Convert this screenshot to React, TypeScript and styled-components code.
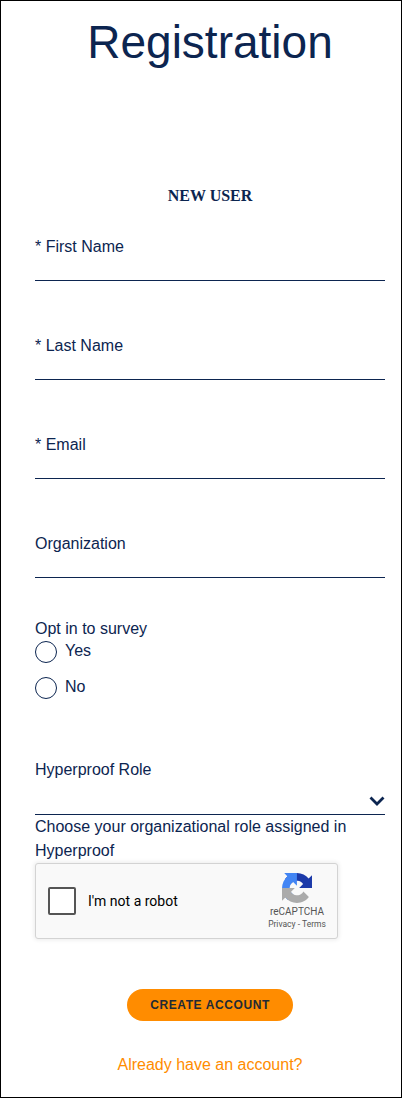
import styled, { createGlobalStyle } from 'styled-components';

const GlobalStyle = createGlobalStyle`
  html, body {
    margin: 0;
    background: #ffffff;
  }
`;

const Page = styled.div`
  box-sizing: border-box;
  width: 402px;
  height: 1098px;
  border: 1px solid #000000;
  padding: 0 16px 0 34px;
  overflow: hidden;
  font-family: 'Liberation Sans', Arial, sans-serif;
  font-size: 16px;
  color: #0c2550;
`;

const Title = styled.h1`
  margin: 14px 0 0;
  text-align: center;
  font-size: 46px;
  line-height: 54px;
  font-weight: 400;
`;

const SectionTitle = styled.h2`
  margin: 118px 0 0;
  text-align: center;
  font-family: 'Liberation Serif', 'Times New Roman', serif;
  font-size: 16px;
  line-height: 18px;
  font-weight: 700;
`;

const Form = styled.form`
  display: flex;
  flex-direction: column;
  margin-top: 32px;
`;

const Field = styled.label<{ $tight?: boolean }>`
  display: block;
  height: ${(p) => (p.$tight ? '85px' : '99px')};
`;

const FieldLabel = styled.span`
  display: block;
  line-height: 20px;
`;

const TextInput = styled.input`
  display: block;
  box-sizing: border-box;
  width: 100%;
  height: 24px;
  padding: 0;
  border: 0;
  border-bottom: 1px solid #0c2550;
  outline: none;
  background: transparent;
`;

const RadioGroup = styled.fieldset`
  margin: 0;
  padding: 0;
  border: 0;
`;

const GroupLabel = styled.legend`
  padding: 0;
  line-height: 20px;
`;

const RadioRow = styled.label`
  display: flex;
  align-items: flex-start;
  gap: 8px;
  height: 36px;
  line-height: 24px;
`;

const Radio = styled.input`
  appearance: none;
  box-sizing: border-box;
  width: 22px;
  height: 22px;
  margin: 2px 0 0;
  border: 1px solid #0c2550;
  border-radius: 50%;
  background: #ffffff;
`;

const SelectWrap = styled.div`
  position: relative;
  margin-top: 49px;
`;

const RoleSelect = styled.select`
  appearance: none;
  display: block;
  box-sizing: border-box;
  width: 100%;
  height: 35px;
  padding: 0;
  border: 0;
  border-bottom: 1px solid #0c2550;
  border-radius: 0;
  outline: none;
  background: transparent;
`;

const Chevron = styled.svg`
  position: absolute;
  right: 0;
  bottom: 9px;
  width: 16px;
  height: 10px;
  fill: none;
  stroke: #0c2550;
  stroke-width: 2.8;
`;

const HelpText = styled.p`
  margin: 0;
  line-height: 24px;
`;

const Captcha = styled.div`
  box-sizing: border-box;
  display: flex;
  align-items: center;
  width: 303px;
  height: 76px;
  padding: 0 11px 0 12px;
  border: 1px solid #d3d3d3;
  border-radius: 3px;
  background: #f9f9f9;
  box-shadow: 0 0 4px 1px rgba(0, 0, 0, 0.08);
  font-family: Roboto, Arial, sans-serif;
  color: #000000;
`;

const CaptchaBox = styled.span`
  box-sizing: border-box;
  flex: none;
  width: 28px;
  height: 28px;
  border: 2px solid #555555;
  border-radius: 2px;
  background: #ffffff;
`;

const CaptchaText = styled.span`
  flex: 1;
  margin-left: 12px;
  font-size: 14px;
`;

const CaptchaBrand = styled.div`
  display: flex;
  flex-direction: column;
  align-items: center;
  width: 58px;
  margin-top: 1px;
  color: #555555;
`;

const CaptchaLogo = styled.svg`
  width: 30px;
  height: 30px;
`;

const BrandName = styled.span`
  margin-top: 3px;
  font-size: 10px;
  line-height: 12px;
`;

const BrandLinks = styled.span`
  font-size: 8.5px;
  line-height: 12px;
  white-space: nowrap;
`;

const SubmitButton = styled.button`
  display: block;
  align-self: center;
  width: 166px;
  height: 32px;
  margin-top: 50px;
  padding: 0;
  border: 0;
  border-radius: 16px;
  background: #ff8c00;
  color: #222a35;
  font-family: 'Liberation Sans', Arial, sans-serif;
  font-size: 12px;
  font-weight: 700;
  letter-spacing: 0.6px;
`;

const LoginLink = styled.a`
  display: block;
  margin-top: 34px;
  text-align: center;
  color: #ff8c00;
  line-height: 20px;
`;

export default function App() {
  return (
    <Page>
      <GlobalStyle />
      <Title>Registration</Title>
      <SectionTitle>NEW USER</SectionTitle>
      <Form>
        <Field>
          <FieldLabel>* First Name</FieldLabel>
          <TextInput />
        </Field>
        <Field>
          <FieldLabel>* Last Name</FieldLabel>
          <TextInput />
        </Field>
        <Field>
          <FieldLabel>* Email</FieldLabel>
          <TextInput />
        </Field>
        <Field $tight>
          <FieldLabel>Organization</FieldLabel>
          <TextInput />
        </Field>
        <RadioGroup>
          <GroupLabel>Opt in to survey</GroupLabel>
          <RadioRow>
            <Radio type="radio" name="survey" />
            Yes
          </RadioRow>
          <RadioRow>
            <Radio type="radio" name="survey" />
            No
          </RadioRow>
        </RadioGroup>
        <SelectWrap>
          <FieldLabel>Hyperproof Role</FieldLabel>
          <RoleSelect />
          <Chevron viewBox="0 0 16 10">
            <path d="M1.500 1.500 8 8l6.500-6.500" />
          </Chevron>
        </SelectWrap>
        <HelpText>Choose your organizational role assigned in Hyperproof</HelpText>
        <Captcha>
          <CaptchaBox />
          <CaptchaText>I'm not a robot</CaptchaText>
          <CaptchaBrand>
            <CaptchaLogo viewBox="0 0 64 64">
              <path
                fill="#1c3aa9"
                d="M64 31.955l-.033-1.37V4.687l-7.16 7.16C50.948 4.674 42.033.093 32.05.093c-10.4 0-19.622 4.96-25.458 12.64l11.736 11.86a15.55 15.55 0 0 1 4.754-5.334c2.05-1.6 4.952-2.906 8.968-2.906.485 0 .86.057 1.137.163 4.976.393 9.288 3.14 11.827 7.124l-8.307 8.307c10.52-.04 22.4-.066 27.295.004"
              />
              <path
                fill="#4285f4"
                d="M31.967.013l-1.37.033H4.68l7.16 7.16C4.667 13.065.086 21.98.086 31.963c0 10.4 4.96 19.622 12.64 25.458l11.86-11.736a15.55 15.55 0 0 1-5.334-4.754c-1.6-2.05-2.906-4.952-2.906-8.968 0-.485.057-.86.163-1.137.393-4.976 3.14-9.288 7.124-11.827l8.307 8.307c-.04-10.52-.066-22.4.004-27.295"
              />
              <path
                fill="#ababab"
                d="M.002 31.967l.033 1.37v25.9l7.16-7.16c5.86 7.173 14.774 11.754 24.757 11.754 10.4 0 19.622-4.96 25.458-12.64l-11.736-11.86a15.55 15.55 0 0 1-4.754 5.334c-2.05 1.6-4.952 2.906-8.968 2.906-.485 0-.86-.057-1.137-.163-4.976-.393-9.288-3.14-11.827-7.124l8.307-8.307c-10.52.04-22.4.066-27.295-.004"
              />
            </CaptchaLogo>
            <BrandName>reCAPTCHA</BrandName>
            <BrandLinks>Privacy - Terms</BrandLinks>
          </CaptchaBrand>
        </Captcha>
        <SubmitButton type="button">CREATE ACCOUNT</SubmitButton>
        <LoginLink>Already have an account?</LoginLink>
      </Form>
    </Page>
  );
}
